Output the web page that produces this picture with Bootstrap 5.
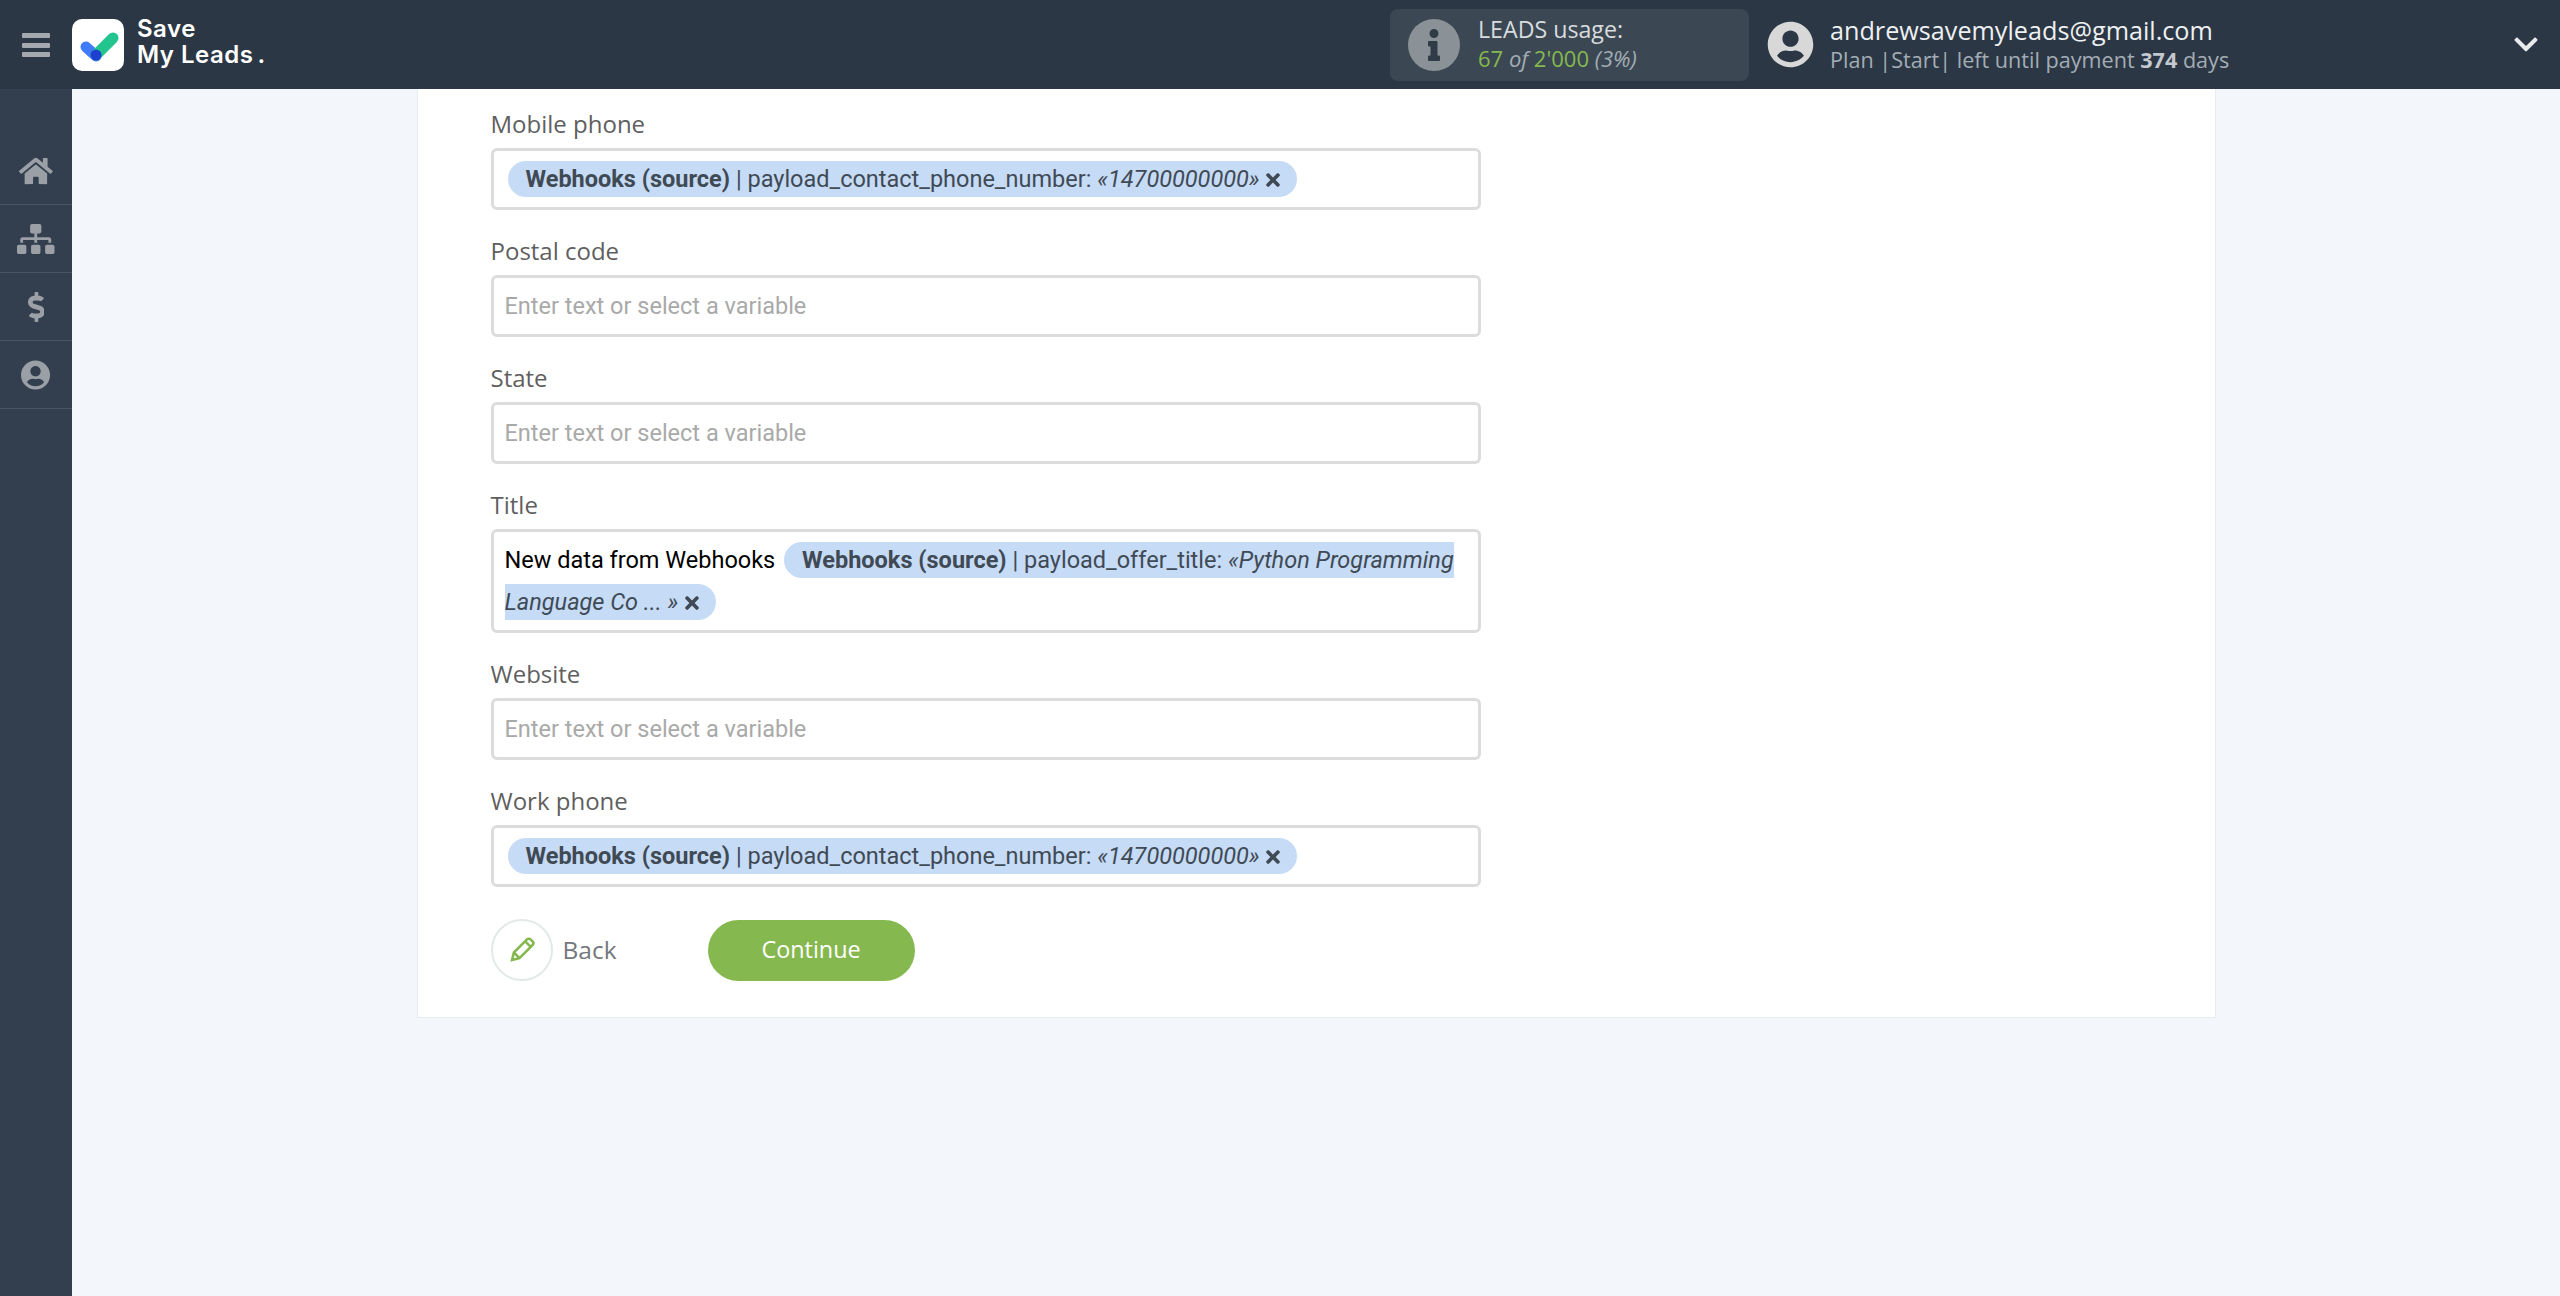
<!DOCTYPE html>
<html lang="en">
<head>
    <meta charset="UTF-8">
    <meta name="viewport" content="width=device-width, initial-scale=1.0">
    <title>Save My Leads</title>
    <link href="https://cdn.jsdelivr.net/npm/bootstrap@5.3.0/dist/css/bootstrap.min.css" rel="stylesheet">
    <style>
        body { background: #f3f6fb; font-family: "Open Sans", sans-serif; height: 1296px; overflow: hidden; }
        .top-bar { background: #2b3744; height: 89px; padding: 0; flex-wrap: nowrap; }
        .burger { width: 72px; }
        .burger svg { width: 28px; height: 24px; fill: #a3a9ae; }
        .logo-box { width: 52px; height: 52px; background: #fff; border-radius: 10px; }
        .logo-text { font-family: Inter, sans-serif; font-weight: 600; font-size: 24px; line-height: 26px; letter-spacing: .5px; color: #fff; margin-left: 13px; margin-top: -6px; }
        .usage-box { background: #3b4853; border-radius: 8px; width: 359px; height: 72px; margin-right: 18px; padding-left: 18px; }
        .usage-icon { width: 52px; height: 52px; border-radius: 50%; background: #8a9297; margin-right: 18px; }
        .usage-icon svg { height: 32px; fill: #2f3b47; }
        .usage-title { color: #d8dcdf; font-size: 23.2px; line-height: 30px; margin-top: -3px; }
        .usage-count { color: #a3adb5; font-size: 22px; line-height: 28px; font-style: italic; }
        .usage-count b { color: #85b84f; font-weight: 400; font-style: normal; }
        .user-pic { width: 47px; height: 47px; fill: #d8d8d8; margin-right: 16px; }
        .user-info { width: 684px; }
        .user-mail { color: #eef0f2; font-size: 25.2px; line-height: 30px; }
        .user-plan { color: #a3adb5; font-size: 21.6px; line-height: 29px; }
        .user-plan b { font-weight: 700; color: #c3c9ce; }
        .chevron { width: 24px; height: 27px; fill: #e8eaec; margin-right: 22px; }
        .side-bar { background: #333f4f; width: 72px; padding-top: 48px; flex-shrink: 0; }
        .side-item { height: 68px; border-bottom: 1px solid #4a5563; display: flex; align-items: center; justify-content: center; }
        .side-item svg { fill: #9aa0a6; height: 30px; }
        .form-panel { width: 1799px; border: 1px solid #e9edf1; border-top: 0; border-radius: 0; padding: 18px 734px 36px 73px; }
        .field-label { font-size: 24px; line-height: 34px; color: #5f5f5f; margin-bottom: 7px; font-weight: 500; display: block; }
        .field-box { border: 3px solid #dcdcdc; border-radius: 6px; font-family: Roboto, sans-serif; font-size: 23.5px; padding: 7px 11px; color: #000; margin-bottom: 24px; line-height: 42px; }
        input.field-box::placeholder { color: #a9a9a9; }
        .var-pill { background: #c6dbf5; color: #404a55; border-radius: 18px; padding: 4px 17px 4px 18px; }
        .var-pill b { font-weight: 700; }
        .var-pill svg { height: 20px; width: 14px; fill: #404a55; vertical-align: -3px; margin-left: 1px; }
        .pill-first { margin-left: 3px; }
        .pill-wide { margin-left: 3px; }
        .back-circle { width: 62px; height: 62px; border: 2px solid #e3eae6; border-radius: 50%; }
        .back-circle svg { width: 30px; height: 30px; fill: none; stroke: #85b84f; stroke-width: 2; }
        .back-text { color: #73787d; font-size: 24.5px; margin-left: 10px; }
        .action-row { margin-top: 32px; }
        .go-btn { background: #85b84f; color: #fff; border: 0; border-radius: 31px; width: 207px; height: 61px; font-size: 23.4px; margin-left: 91px; }
        .go-btn:hover { background: #85b84f; color: #fff; }
    </style>
</head>
<body>
    <nav class="navbar top-bar">
        <div class="burger d-flex justify-content-center">
            <svg viewBox="0 0 28 24"><rect y="0" width="28" height="5" rx="1"/><rect y="10" width="28" height="5" rx="1"/><rect y="19" width="28" height="5" rx="1"/></svg>
        </div>
        <div class="logo-box d-flex align-items-center justify-content-center">
            <svg width="52" height="52" viewBox="0 0 52 52"><line x1="14" y1="28" x2="24" y2="37" stroke="#3f7bfa" stroke-width="11" stroke-linecap="round"/><line x1="24" y1="36" x2="41" y2="19" stroke="#23c58e" stroke-width="11" stroke-linecap="round"/><circle cx="24" cy="36" r="5.5" fill="#1f3fd0"/></svg>
        </div>
        <div class="logo-text">Save<br>My Leads<span class="ms-1">.</span></div>
        <div class="d-flex align-items-center flex-grow-1 justify-content-end">
            <div class="usage-box d-flex align-items-center">
                <div class="usage-icon d-flex align-items-center justify-content-center">
                    <svg viewBox="0 0 192 512"><path d="M20 424.229h20V279.771H20c-11.046 0-20-8.954-20-20V212c0-11.046 8.954-20 20-20h112c11.046 0 20 8.954 20 20v212.229h20c11.046 0 20 8.954 20 20V492c0 11.046-8.954 20-20 20H20c-11.046 0-20-8.954-20-20v-47.771c0-11.046 8.954-20 20-20zM96 0C56.235 0 24 32.235 24 72s32.235 72 72 72 72-32.235 72-72S135.764 0 96 0z"/></svg>
                </div>
                <div>
                    <div class="usage-title">LEADS usage:</div>
                    <div class="usage-count"><b>67</b> of <b>2'000</b> (3%)</div>
                </div>
            </div>
            <svg class="user-pic" viewBox="0 0 496 512"><path d="M248 8C111 8 0 119 0 256s111 248 248 248 248-111 248-248S385 8 248 8zm0 96c48.6 0 88 39.4 88 88s-39.4 88-88 88-88-39.4-88-88 39.4-88 88-88zm0 344c-58.7 0-111.3-26.6-146.5-68.2 18.8-35.4 55.6-59.8 98.5-59.8 2.4 0 4.8.4 7.1 1.1 13 4.2 26.6 6.9 40.9 6.9 14.3 0 28-2.7 40.9-6.9 2.3-.7 4.7-1.1 7.1-1.1 42.9 0 79.7 24.4 98.5 59.8C359.3 421.4 306.7 448 248 448z"/></svg>
            <div class="user-info">
                <div class="user-mail">andrewsavemyleads@gmail.com</div>
                <div class="user-plan">Plan |Start| left until payment <b>374</b> days</div>
            </div>
            <svg class="chevron" viewBox="0 0 448 512"><path d="M207.029 381.476L12.686 187.132c-9.373-9.373-9.373-24.569 0-33.941l22.667-22.667c9.357-9.357 24.522-9.375 33.901-.04L224 284.505l154.745-154.021c9.379-9.335 24.544-9.317 33.901.04l22.667 22.667c9.373 9.373 9.373 24.569 0 33.941L240.971 381.476c-9.373 9.372-24.569 9.372-33.942 0z"/></svg>
        </div>
    </nav>

    <div class="d-flex" style="height:1207px">
        <div class="side-bar">
            <div class="side-item"><svg viewBox="0 0 576 512"><path d="M280.37 148.26L96 300.11V464a16 16 0 0 0 16 16l112.06-.29a16 16 0 0 0 15.92-16V368a16 16 0 0 1 16-16h64a16 16 0 0 1 16 16v95.64a16 16 0 0 0 16 16.05L464 480a16 16 0 0 0 16-16V300L295.67 148.26a12.19 12.19 0 0 0-15.3 0zM571.6 251.47L488 182.56V44.05a12 12 0 0 0-12-12h-56a12 12 0 0 0-12 12v72.61L318.47 43a48 48 0 0 0-61 0L4.34 251.47a12 12 0 0 0-1.6 16.9l25.5 31A12 12 0 0 0 45.15 301l235.22-193.74a12.19 12.19 0 0 1 15.3 0L530.9 301a12 12 0 0 0 16.9-1.6l25.5-31a12 12 0 0 0-1.7-16.93z"/></svg></div>
            <div class="side-item"><svg viewBox="0 0 640 512"><path d="M128 352H32c-17.67 0-32 14.33-32 32v96c0 17.67 14.33 32 32 32h96c17.67 0 32-14.33 32-32v-96c0-17.67-14.33-32-32-32zm-24-80h192v48h48v-48h192v48h48v-57.59c0-21.17-17.23-38.41-38.41-38.41H344v-64h40c17.67 0 32-14.33 32-32V32c0-17.67-14.33-32-32-32H256c-17.67 0-32 14.33-32 32v96c0 17.67 14.33 32 32 32h40v64H94.41C73.23 224 56 241.23 56 262.41V320h48v-48zm264 80h-96c-17.67 0-32 14.33-32 32v96c0 17.67 14.33 32 32 32h96c17.67 0 32-14.33 32-32v-96c0-17.67-14.33-32-32-32zm240 0h-96c-17.67 0-32 14.33-32 32v96c0 17.67 14.33 32 32 32h96c17.67 0 32-14.33 32-32v-96c0-17.67-14.33-32-32-32z"/></svg></div>
            <div class="side-item"><svg viewBox="0 0 288 512"><path d="M209.2 233.4l-108-31.6C88.7 198.2 80 186.5 80 173.5c0-16.3 13.2-29.5 29.5-29.5h66.3c12.2 0 24.2 3.7 34.2 10.5 6.1 4.1 14.3 3.1 19.5-2l34.8-34c7.1-6.9 6.1-18.4-1.8-24.5C238 74.8 207.4 64.1 176 64V16c0-8.8-7.2-16-16-16h-32c-8.8 0-16 7.2-16 16v48h-2.5C45.8 64-5.4 118.7.5 183.6c4.2 46.1 39.4 83.6 83.8 96.6l102.5 30c12.5 3.7 21.2 15.3 21.2 28.3 0 16.3-13.2 29.5-29.5 29.5h-66.3C100 368 88 364.3 78 357.5c-6.1-4.1-14.3-3.1-19.5 2l-34.8 34c-7.1 6.9-6.1 18.4 1.8 24.5 24.5 19.2 55.1 29.9 86.5 30v48c0 8.8 7.2 16 16 16h32c8.8 0 16-7.2 16-16v-48.2c46.6-.9 90.3-28.6 105.7-72.7 21.5-61.6-14.6-124.8-72.5-141.7z"/></svg></div>
            <div class="side-item"><svg viewBox="0 0 496 512"><path d="M248 8C111 8 0 119 0 256s111 248 248 248 248-111 248-248S385 8 248 8zm0 96c48.6 0 88 39.4 88 88s-39.4 88-88 88-88-39.4-88-88 39.4-88 88-88zm0 344c-58.7 0-111.3-26.6-146.5-68.2 18.8-35.4 55.6-59.8 98.5-59.8 2.4 0 4.8.4 7.1 1.1 13 4.2 26.6 6.9 40.9 6.9 14.3 0 28-2.7 40.9-6.9 2.3-.7 4.7-1.1 7.1-1.1 42.9 0 79.7 24.4 98.5 59.8C359.3 421.4 306.7 448 248 448z"/></svg></div>
        </div>
        <div class="flex-grow-1">
            <div class="card form-panel mx-auto align-self-start">
                <label class="field-label">Mobile phone</label>
                <div class="form-control field-box"><span class="var-pill pill-first"><b>Webhooks (source)</b> | payload_contact_phone_number: <i>«14700000000»</i> <svg viewBox="0 0 352 512"><path d="M242.72 256l100.07-100.07c12.28-12.28 12.28-32.19 0-44.48l-22.24-22.24c-12.28-12.28-32.19-12.28-44.48 0L176 189.28 75.93 89.21c-12.28-12.28-32.19-12.28-44.48 0L9.21 111.45c-12.28 12.28-12.28 32.19 0 44.48L109.28 256 9.21 356.07c-12.28 12.28-12.28 32.19 0 44.48l22.24 22.24c12.28 12.28 32.2 12.28 44.48 0L176 322.72l100.07 100.07c12.28 12.28 32.2 12.28 44.48 0l22.24-22.24c12.28-12.28 12.28-32.19 0-44.48L242.72 256z"/></svg></span></div>
                <label class="field-label">Postal code</label>
                <input class="form-control field-box" type="text" placeholder="Enter text or select a variable">
                <label class="field-label">State</label>
                <input class="form-control field-box" type="text" placeholder="Enter text or select a variable">
                <label class="field-label">Title</label>
                <div class="form-control field-box">New data from Webhooks <span class="var-pill pill-wide"><b>Webhooks (source)</b> | payload_offer_title: <i>«Python Programming Language Co ... »</i> <svg viewBox="0 0 352 512"><path d="M242.72 256l100.07-100.07c12.28-12.28 12.28-32.19 0-44.48l-22.24-22.24c-12.28-12.28-32.19-12.28-44.48 0L176 189.28 75.93 89.21c-12.28-12.28-32.19-12.28-44.48 0L9.21 111.45c-12.28 12.28-12.28 32.19 0 44.48L109.28 256 9.21 356.07c-12.28 12.28-12.28 32.19 0 44.48l22.24 22.24c12.28 12.28 32.2 12.28 44.48 0L176 322.72l100.07 100.07c12.28 12.28 32.2 12.28 44.48 0l22.24-22.24c12.28-12.28 12.28-32.19 0-44.48L242.72 256z"/></svg></span></div>
                <label class="field-label">Website</label>
                <input class="form-control field-box" type="text" placeholder="Enter text or select a variable">
                <label class="field-label">Work phone</label>
                <div class="form-control field-box mb-0"><span class="var-pill pill-first"><b>Webhooks (source)</b> | payload_contact_phone_number: <i>«14700000000»</i> <svg viewBox="0 0 352 512"><path d="M242.72 256l100.07-100.07c12.28-12.28 12.28-32.19 0-44.48l-22.24-22.24c-12.28-12.28-32.19-12.28-44.48 0L176 189.28 75.93 89.21c-12.28-12.28-32.19-12.28-44.48 0L9.21 111.45c-12.28 12.28-12.28 32.19 0 44.48L109.28 256 9.21 356.07c-12.28 12.28-12.28 32.19 0 44.48l22.24 22.24c12.28 12.28 32.2 12.28 44.48 0L176 322.72l100.07 100.07c12.28 12.28 32.2 12.28 44.48 0l22.24-22.24c12.28-12.28 12.28-32.19 0-44.48L242.72 256z"/></svg></span></div>
                <div class="action-row d-flex align-items-center">
                    <div class="back-circle d-flex align-items-center justify-content-center">
                        <svg viewBox="0 0 24 24"><path d="M4 20l1.500-6L16 3.500c.8-.8 2-.8 2.800 0l1.700 1.700c.8.800.8 2 0 2.800L10 18.500 4 20zM14.500 5l4.500 4.500M5.500 14l4.500 4.500"/></svg>
                    </div>
                    <span class="back-text">Back</span>
                    <button class="btn go-btn" type="button">Continue</button>
                </div>
            </div>
        </div>
    </div>
    <script src="https://cdn.jsdelivr.net/npm/bootstrap@5.3.0/dist/js/bootstrap.bundle.min.js"></script>
</body>
</html>
